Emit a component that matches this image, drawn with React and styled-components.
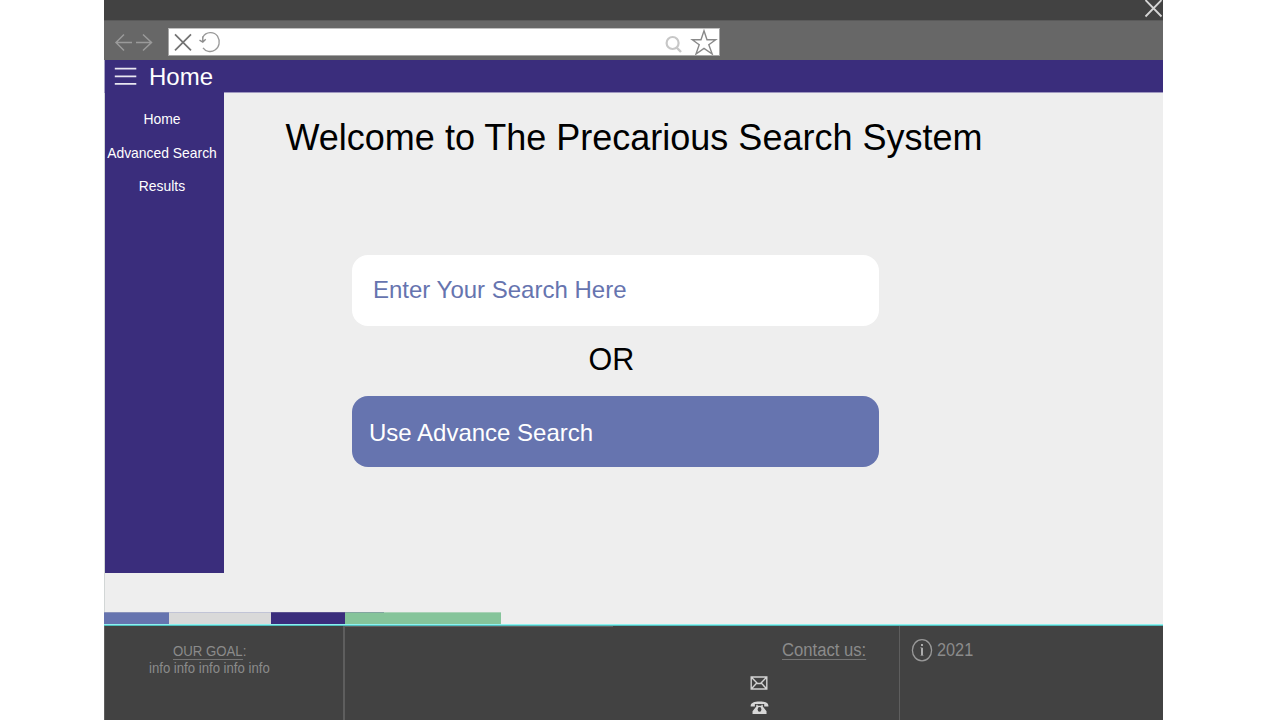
import React from "react";
import styled, { createGlobalStyle } from "styled-components";

const GlobalStyle = createGlobalStyle`
  * { box-sizing: border-box; }
  html, body { margin: 0; height: 720px; overflow: hidden; background: #fff; }
  body { font-family: "Liberation Sans", Arial, sans-serif; }
`;

const Window = styled.div`
  width: 1059px;
  height: 720px;
  margin-left: 104px;
  display: flex;
  flex-direction: column;
  background: #eeeeee;
`;

const TitleBar = styled.div`
  height: 20px;
  flex: none;
  display: flex;
  justify-content: flex-end;
  background: #424242;
`;

const Toolbar = styled.div`
  height: 40px;
  flex: none;
  display: flex;
  align-items: flex-start;
  background: #676767;
  border-top: 1px solid #5a5a5a;
`;

const NavArrows = styled.svg`
  width: 64px;
  height: 39px;
  flex: none;
`;

const AddressBar = styled.div`
  width: 552px;
  height: 28px;
  margin-top: 7px;
  display: flex;
  justify-content: space-between;
  background: #fff;
  border: 1px solid #a6a6a6;
  border-top-color: #c0c0c0;
`;

const Icon = styled.svg`
  width: ${(p) => p.$w}px;
  height: ${(p) => p.$h}px;
  flex: none;
  display: block;
`;

const Header = styled.header`
  height: 33px;
  flex: none;
  display: flex;
  color: #fff;
  background: #3a2d7c;
  border-left: 1px solid #a9a6c4;
  border-bottom: 1px solid #9f98c0;
`;

const HeaderTitle = styled.div`
  font-size: 24px;
  line-height: 32px;
  padding: 1px 0 0 9px;
`;

const Body = styled.div`
  height: 519px;
  flex: none;
  display: flex;
  border-left: 1px solid #d2d6d6;
`;

const Sidebar = styled.nav`
  width: 119px;
  height: 481px;
  margin-top: -1px;
  padding: 11px 5px 0 0;
  display: flex;
  flex-direction: column;
  align-items: center;
  background: #3a2d7c;
`;

const NavItem = styled.a`
  color: #fff;
  font-size: 13.9px;
  line-height: 33.6px;
  white-space: nowrap;
`;

const Main = styled.main`
  flex: 1;
  display: flex;
  flex-direction: column;
  padding-left: 128px;
`;

const Heading = styled.h1`
  margin: 24px 0 0 -66.5px;
  font-size: 36px;
  line-height: 42px;
  font-weight: 400;
  color: #000;
  white-space: nowrap;
`;

const SearchBox = styled.div`
  width: 527px;
  height: 71px;
  flex: none;
  border-radius: 16px;
  margin-top: ${(p) => p.$top}px;
  padding: ${(p) => p.$pad};
  font-size: 24px;
  line-height: 28px;
  color: ${(p) => (p.$filled ? "#fff" : "#6674af")};
  background: ${(p) => (p.$filled ? "#6674af" : "#fff")};
`;

const Or = styled.div`
  height: 70px;
  margin-left: 236.5px;
  font-size: 30.5px;
  line-height: 66px;
`;

const Strip = styled.div`
  height: 12px;
  flex: none;
  display: flex;
`;

const Swatch = styled.div`
  width: ${(p) => p.$w}px;
  background: ${(p) => p.$color};
  border-top: 1px solid ${(p) => p.$edge};
`;

const CyanLine = styled.div`
  height: 2px;
  flex: none;
  background: #4fbdbc;
  border-top: 1px solid #8df1ef;
`;

const Footer = styled.footer`
  height: 94px;
  flex: none;
  display: flex;
  background: #424242;
  color: #8b8b8b;
`;

const FooterColumn = styled.section`
  width: ${(p) => p.$w}px;
  height: 94px;
  padding-top: ${(p) => p.$top}px;
  padding-left: ${(p) => p.$left}px;
  border-left: ${(p) => (p.$line ? `${p.$line}px solid #5e5e5e` : "0")};
`;

const EdgeLine = styled.div`
  width: 268px;
  height: 1px;
  background: #626262;
`;

const FooterText = styled.div`
  width: max-content;
  font-size: ${(p) => p.$size}px;
  line-height: ${(p) => p.$lh}px;
  margin-left: ${(p) => p.$left || 0}px;
  transform: scaleX(${(p) => p.$scale});
  transform-origin: left;
  white-space: nowrap;
`;

const Underlined = styled.span`
  display: inline-block;
  line-height: ${(p) => p.$lh}px;
  border-bottom: ${(p) => p.$line}px solid #757575;
`;

const ContactIcons = styled.div`
  display: flex;
  flex-direction: column;
  gap: 11px;
  margin: 16px 0 0;
`;

const YearRow = styled.div`
  display: flex;
  align-items: flex-start;
`;

export default function App() {
  return (
    <>
      <GlobalStyle />
      <Window>
        <TitleBar>
          <Icon $w={19} $h={20} viewBox="0 0 19 20" fill="none" stroke="#d5d5d5" strokeWidth="1.8">
            <path d="M1.5 0 L17.5 16.5 M17.5 0 L1.5 16.5" />
          </Icon>
        </TitleBar>
        <Toolbar>
          <NavArrows viewBox="0 0 64 39" fill="none" stroke="#9a9a9a" strokeWidth="1.5">
            <path d="M28 21.5H12M20 13.5L12 21.5L20 29.5M32 21.5H48M39 13.5L47.5 21.5L39 29.5" />
          </NavArrows>
          <AddressBar>
            <Icon $w={56} $h={26} viewBox="0 0 56 26" fill="none">
              <path d="M6 5.3L22 21.3M22 5.3L6 21.3" stroke="#737373" strokeWidth="1.7" />
              <path d="M33.8 8.2C37 2.5 45 2.2 48.5 7.2C51.5 12 50.5 18 46 21C42 23.7 36.5 22.5 34 18.8" stroke="#999" strokeWidth="1.3" />
              <path d="M33.8 7.5V12.5M30.5 11.2L33.8 13.2L36.7 10.2" stroke="#8d8d8d" strokeWidth="1.4" />
            </Icon>
            <Icon $w={55} $h={26} viewBox="0 0 55 26" fill="none">
              <circle cx="8.6" cy="14" r="6" stroke="#c7c7c7" strokeWidth="2.2" />
              <path d="M12.6 18.5L17 23" stroke="#c7c7c7" strokeWidth="2.5" />
              <path d="M40 1.8L43 10.7H51.7L44.8 15.7L48.2 25L40 19.4L32 25L35.2 15.7L28.3 10.7H37Z" stroke="#898989" strokeWidth="1.4" />
            </Icon>
          </AddressBar>
        </Toolbar>
        <Header>
          <Icon $w={35} $h={32} viewBox="0 0 35 32" stroke="#e9e7f1" strokeWidth="1.8">
            <path d="M9.8 8.7H31.3M9.8 16.3H31.3M9.8 23.8H31.3" />
          </Icon>
          <HeaderTitle>Home</HeaderTitle>
        </Header>
        <Body>
          <Sidebar>
            <NavItem>Home</NavItem>
            <NavItem>Advanced Search</NavItem>
            <NavItem>Results</NavItem>
          </Sidebar>
          <Main>
            <Heading>Welcome to The Precarious Search System</Heading>
            <SearchBox $top={96} $pad="21px 0 0 21px">Enter Your Search Here</SearchBox>
            <Or>OR</Or>
            <SearchBox $top={0} $pad="23px 0 0 17px" $filled>Use Advance Search</SearchBox>
          </Main>
        </Body>
        <Strip>
          <Swatch $w={64.5} $color="#6674af" $edge="#8992bb" />
          <Swatch $w={102.5} $color="#d9d9d9" $edge="#c1c4d6" />
          <Swatch $w={74} $color="#3a2d7c" $edge="#5b5290" />
          <Swatch $w={39} $color="#85c49a" $edge="#82a6a0" />
          <Swatch $w={117} $color="#85c49a" $edge="#a9d2b7" />
        </Strip>
        <CyanLine />
        <Footer>
          <FooterColumn $w={238.5} $top={17} $left={44} $line={1}>
            <FooterText $size={14.5} $lh={17} $left={24} $scale={0.91}>
              <Underlined $lh={15} $line={1}>OUR GOAL</Underlined>:
            </FooterText>
            <FooterText $size={14} $lh={17} $scale={0.94}>info info info info info</FooterText>
          </FooterColumn>
          <FooterColumn $w={269.5} $top={0} $left={0} $line={2}>
            <EdgeLine />
          </FooterColumn>
          <FooterColumn $w={286.5} $top={14} $left={138}>
            <FooterText $size={18} $lh={20} $left={31.5} $scale={0.925}>
              <Underlined $lh={18} $line={1}>Contact us:</Underlined>
            </FooterText>
            <ContactIcons>
              <Icon $w={18} $h={14} viewBox="0 0 18 14" fill="none" stroke="#d2d2d2" strokeWidth="1.4">
                <path d="M1.2 1H16.8V13H1.2ZM1.2 1L7.5 7.5H10.5L16.8 1M1.2 13L6.8 7M16.8 13L11.2 7" />
              </Icon>
              <Icon $w={20} $h={14} viewBox="0 0 20 15" fill="#d8d8d8">
                <path d="M0 5C0 2 4 .5 9.5 .5S19 2 19 5V6H14.5V3.2H4.5V6H0ZM6 4H7.5V5H11.5V4H13V6L17 11V14H2V11L6 6Z" />
                <ellipse cx="9.5" cy="9" rx="2" ry="2.6" fill="#424242" />
              </Icon>
            </ContactIcons>
          </FooterColumn>
          <FooterColumn $w={264.5} $top={12} $left={11} $line={1}>
            <YearRow>
              <Icon $w={22} $h={24} viewBox="0 0 22 24" fill="none" stroke="#999">
                <ellipse cx="11" cy="12.2" rx="9.6" ry="10.6" strokeWidth="1.3" />
                <path d="M11 9.8V17.5M11 6V8" stroke="#bababa" strokeWidth="1.8" />
                <path d="M9 9.8H11M9.5 17.5H12.5" stroke="#8c8c8c" strokeWidth=".8" />
              </Icon>
              <FooterText $size={18} $lh={24} $left={4.5} $scale={0.905}>2021</FooterText>
            </YearRow>
          </FooterColumn>
        </Footer>
      </Window>
    </>
  );
}
